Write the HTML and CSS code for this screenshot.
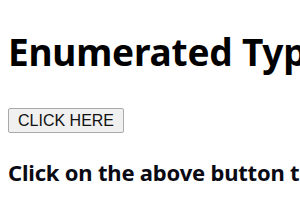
FILE: index.html
```html
<!DOCTYPE html>
<html lang="en">
<head>
    <meta charset="UTF-8">
    <meta name="viewport" content="width=device-width, initial-scale=1.0">
    <title>Enumerated Types</title>
    <link rel="stylesheet" href="styles.css">
</head>
<body>
    <h1>Enumerated Types in JavaScript</h1>
    <button class="click-button">CLICK HERE</button>
    <h3 class="result">Click on the above button to display the enum values</h3>
</body>
</html>
```

FILE: styles.css
```css
* {
    box-sizing: border-box;
}

html, body {
    overflow: hidden;
}

body {
    margin: 0;
    padding: 30px 8px 0;
    font-family: 'Noto Sans', 'Open Sans', sans-serif;
    color: #000;
    background: #fff;
    white-space: nowrap;
}

h1 {
    font-size: 37px;
    line-height: 44px;
    font-weight: bold;
    letter-spacing: -0.2px;
    margin: 0 0 34px;
}

.click-button {
    display: block;
    font-family: 'Liberation Sans', Arial, sans-serif;
    font-size: 16px;
    line-height: 19px;
    padding: 2px 9px;
    background: #f0f0f0;
    border: 1px solid #a9a9a9;
    border-radius: 2px;
    color: #111;
}

.result {
    font-size: 22px;
    line-height: 30px;
    font-weight: bold;
    letter-spacing: -0.2px;
    margin: 24px 0 0;
    color: #0a0a14;
}
```
